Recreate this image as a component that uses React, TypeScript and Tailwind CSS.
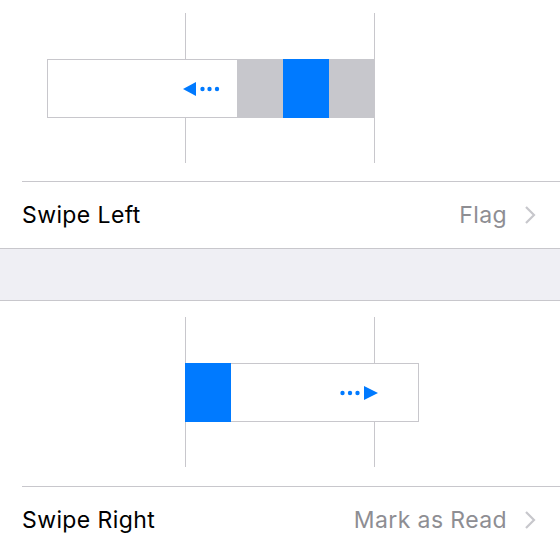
const BLUE = "#007aff";
const LINE = "#c8c7cc";

function Chevron() {
  return (
    <svg width="15" height="18" viewBox="0 0 15 18" className="shrink-0">
      <polyline points="4,1 12,9 4,17" fill="none" stroke="#c7c7cc" strokeWidth="2.2" />
    </svg>
  );
}

function Row({ label, value }: { label: string; value: string }) {
  return (
    <div className="flex h-[66px] items-center justify-between pl-[22px] pr-[23px] text-[23px] tracking-[0.4px]">
      <span className="text-black">{label}</span>
      <div className="flex items-center gap-[15px]">
        <span className="text-[#8e8e93]">{value}</span>
        <Chevron />
      </div>
    </div>
  );
}

function SwipeLeftArt() {
  return (
    <svg width="560" height="181" viewBox="0 0 560 181" className="block">
      <line x1="185.5" y1="13" x2="185.5" y2="163" stroke={LINE} strokeWidth="1" />
      <rect x="47.5" y="59.5" width="190" height="58" fill="#fff" stroke={LINE} strokeWidth="1" />
      <rect x="237" y="59" width="137" height="59" fill="#c7c7cc" />
      <rect x="283" y="59" width="46" height="59" fill={BLUE} />
      <line x1="374.5" y1="13" x2="374.5" y2="163" stroke={LINE} strokeWidth="1" />
      <polygon points="183,89 196,82 196,96" fill={BLUE} />
      <circle cx="202.5" cy="89" r="2.2" fill={BLUE} />
      <circle cx="209.5" cy="89" r="2.2" fill={BLUE} />
      <circle cx="217" cy="89" r="2.2" fill={BLUE} />
    </svg>
  );
}

function SwipeRightArt() {
  return (
    <svg width="560" height="185" viewBox="0 0 560 185" className="block">
      <line x1="185.5" y1="16" x2="185.5" y2="166" stroke={LINE} strokeWidth="1" />
      <line x1="374.5" y1="16" x2="374.5" y2="166" stroke={LINE} strokeWidth="1" />
      <rect x="185.5" y="62.5" width="233" height="58" fill="#fff" stroke={LINE} strokeWidth="1" />
      <rect x="185" y="62" width="46" height="59" fill={BLUE} />
      <circle cx="342.5" cy="92" r="2.2" fill={BLUE} />
      <circle cx="350" cy="92" r="2.2" fill={BLUE} />
      <circle cx="357.5" cy="92" r="2.2" fill={BLUE} />
      <polygon points="378,92 364,85 364,99" fill={BLUE} />
    </svg>
  );
}

export default function App() {
  return (
    <div className="h-[550px] w-[560px] overflow-hidden bg-white font-['Inter',sans-serif]">
      <SwipeLeftArt />
      <div className="ml-[22px] h-px bg-[#c8c7cc]" />
      <Row label="Swipe Left" value="Flag" />
      <div className="h-[53px] border-y border-[#c8c7cc] bg-[#efeff4]" />
      <SwipeRightArt />
      <div className="ml-[22px] h-px bg-[#c8c7cc]" />
      <Row label="Swipe Right" value="Mark as Read" />
    </div>
  );
}
